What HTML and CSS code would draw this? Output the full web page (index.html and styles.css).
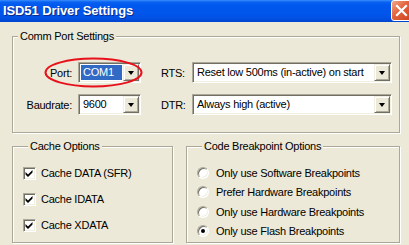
FILE: index.html
```html
<!DOCTYPE html>
<html lang="en">
<head>
    <meta charset="UTF-8">
    <meta name="viewport" content="width=device-width, initial-scale=1.0">
    <title>ISD51 Driver Settings</title>
    <link rel="stylesheet" href="styles.css">
</head>
<body>

    <div class="window">
        <div class="titlebar">
            <span class="title">ISD51 Driver Settings</span>
            <span class="close-btn">
                <svg width="13" height="13" viewBox="0 0 13 13">
                    <path d="M2 2 L11 11 M11 2 L2 11" stroke="#fff" stroke-width="2.2" stroke-linecap="square"/>
                </svg>
            </span>
        </div>

        <div class="client">
            <fieldset class="group comm">
                <legend>Comm Port Settings</legend>
                <div class="port-grid">
                    <label class="lbl-left">Port:</label>
                    <div class="combo">
                        <span class="value selected">COM1</span>
                        <span class="drop"><span class="arrow"></span></span>
                    </div>
                    <label class="lbl-right">RTS:</label>
                    <div class="combo">
                        <span class="value">Reset low 500ms (in-active) on start</span>
                        <span class="drop"><span class="arrow"></span></span>
                    </div>

                    <label class="lbl-left">Baudrate:</label>
                    <div class="combo">
                        <span class="value">9600</span>
                        <span class="drop"><span class="arrow"></span></span>
                    </div>
                    <label class="lbl-right">DTR:</label>
                    <div class="combo">
                        <span class="value">Always high (active)</span>
                        <span class="drop"><span class="arrow"></span></span>
                    </div>
                </div>
            </fieldset>

            <div class="lower">
                <fieldset class="group cache">
                    <legend>Cache Options</legend>
                    <div class="check-row"><span class="checkbox checked"></span>Cache DATA (SFR)</div>
                    <div class="check-row"><span class="checkbox checked"></span>Cache IDATA</div>
                    <div class="check-row"><span class="checkbox checked"></span>Cache XDATA</div>
                </fieldset>

                <fieldset class="group breakpoints">
                    <legend>Code Breakpoint Options</legend>
                    <div class="radio-row"><span class="radio"></span>Only use Software Breakpoints</div>
                    <div class="radio-row"><span class="radio"></span>Prefer Hardware Breakpoints</div>
                    <div class="radio-row"><span class="radio"></span>Only use Hardware Breakpoints</div>
                    <div class="radio-row"><span class="radio on"></span>Only use Flash Breakpoints</div>
                </fieldset>
            </div>
        </div>

        <!-- red annotation ring around the Port field -->
        <svg class="ring" width="100" height="32" viewBox="0 0 100 32">
            <ellipse cx="49.5" cy="15.5" rx="48" ry="14" fill="none" stroke="#e8101a" stroke-width="2"/>
        </svg>
    </div>

</body>
</html>
```

FILE: styles.css
```css
html, body {
    margin: 0;
    padding: 0;
}

body {
    font-family: "Liberation Sans", Arial, sans-serif;
    font-size: 11px;
    letter-spacing: -0.25px;
    color: #000;
    background-color: #ece9d8;
}

.window {
    position: relative;
    width: 409px;
    height: 245px;
    overflow: hidden;
    background-color: #ece9d8;
}

/* title bar */

.titlebar {
    height: 22px;
    display: flex;
    align-items: flex-start;
    justify-content: space-between;
    background: linear-gradient(to bottom, #3c8ffb 0px, #0a62f2 2px, #0058ee 5px, #0055ea 14px, #004fe2 19px, #0043cc 22px);
}

.title {
    padding: 3px 0 0 3px;
    font-family: "Liberation Sans", Arial, sans-serif;
    font-size: 13px;
    font-weight: bold;
    letter-spacing: -0.1px;
    line-height: 16px;
    color: #fff;
    text-shadow: 1px 1px 0 #0a2a8c;
}

.close-btn {
    width: 21px;
    height: 21px;
    margin: 0 -3px 0 0;
    box-sizing: border-box;
    border: 1px solid #fff;
    border-radius: 3px;
    background: linear-gradient(135deg, #f1a78b 0%, #e2623d 45%, #cc4420 100%);
    display: flex;
    align-items: center;
    justify-content: center;
}

/* dialog body */

.client {
    padding: 8px 9px 0 12px;
}

.group {
    margin: 0;
    padding: 0;
    min-width: 0;
    border: 1px solid #aca899;
    box-shadow: 1px 1px 0 #fff, inset 1px 1px 0 #fff;
}

.group legend {
    margin-left: 5px;
    padding: 0 2px;
    line-height: 13px;
    background-color: #ece9d8;
}

.comm {
    width: 388px;
    box-sizing: border-box;
    padding: 19px 0 17px 0;
}

.port-grid {
    display: grid;
    grid-template-columns: 65px 63px 51px 200px;
    grid-auto-rows: 21px;
    row-gap: 11px;
    align-items: center;
}

.lbl-left {
    text-align: right;
    padding-right: 6px;
}

.lbl-right {
    padding-left: 20px;
}

/* classic combo box */

.combo {
    height: 21px;
    box-sizing: border-box;
    display: flex;
    padding: 1px;
    border: 1px solid;
    border-color: #aca899 #fff #fff #aca899;
    box-shadow: inset 1px 1px 0 #716f64, inset -1px -1px 0 #f1efe2;
    background-color: #fff;
}

.combo .value {
    flex: 1;
    margin: 1px 1px 1px 1px;
    padding-left: 2px;
    line-height: 15px;
    white-space: nowrap;
    overflow: hidden;
}

.combo .selected {
    background-color: #316ac5;
    color: #fff;
}

.drop {
    width: 16px;
    height: 17px;
    box-sizing: border-box;
    border: 1px solid;
    border-color: #f1efe2 #716f64 #716f64 #f1efe2;
    box-shadow: inset 1px 1px 0 #fff, inset -1px -1px 0 #aca899;
    background-color: #ece9d8;
    display: flex;
    align-items: center;
    justify-content: center;
}

.arrow {
    width: 0;
    height: 0;
    border-left: 3.5px solid transparent;
    border-right: 3.5px solid transparent;
    border-top: 4px solid #000;
}

/* lower group row */

.lower {
    display: flex;
    gap: 13px;
    margin-top: 7px;
}

.cache {
    width: 161px;
    box-sizing: border-box;
    padding: 7px 0 4px 10px;
}

.breakpoints {
    width: 214px;
    box-sizing: border-box;
    padding: 10px 0 0 10px;
}

.check-row {
    height: 26px;
    display: flex;
    align-items: center;
    gap: 5px;
}

.checkbox {
    width: 13px;
    height: 13px;
    box-sizing: border-box;
    border: 1px solid;
    border-color: #aca899 #fff #fff #aca899;
    box-shadow: inset 1px 1px 0 #716f64, inset -1px -1px 0 #f1efe2;
    background-color: #fff;
}

.checkbox.checked {
    background: #fff url("data:image/svg+xml;utf8,<svg xmlns='http://www.w3.org/2000/svg' width='11' height='11'><path d='M1.5 4 L4 6.5 L8.5 2 L8.5 4.5 L4 9 L1.5 6.5 Z' fill='black'/></svg>") no-repeat 0 0;
}

.radio-row {
    height: 19.5px;
    display: flex;
    align-items: center;
    gap: 7px;
}

.radio {
    width: 12px;
    height: 12px;
    border-radius: 50%;
    box-sizing: border-box;
    border: 1px solid;
    border-color: #aca899 #fff #fff #aca899;
    box-shadow: inset 1px 1px 0 #716f64, inset -1px -1px 0 #f1efe2;
    background-color: #fff;
    display: flex;
    align-items: center;
    justify-content: center;
}

.radio.on::after {
    content: "";
    width: 4px;
    height: 4px;
    border-radius: 50%;
    background-color: #000;
}

.ring {
    position: absolute;
    left: 44px;
    top: 57px;
}
```
